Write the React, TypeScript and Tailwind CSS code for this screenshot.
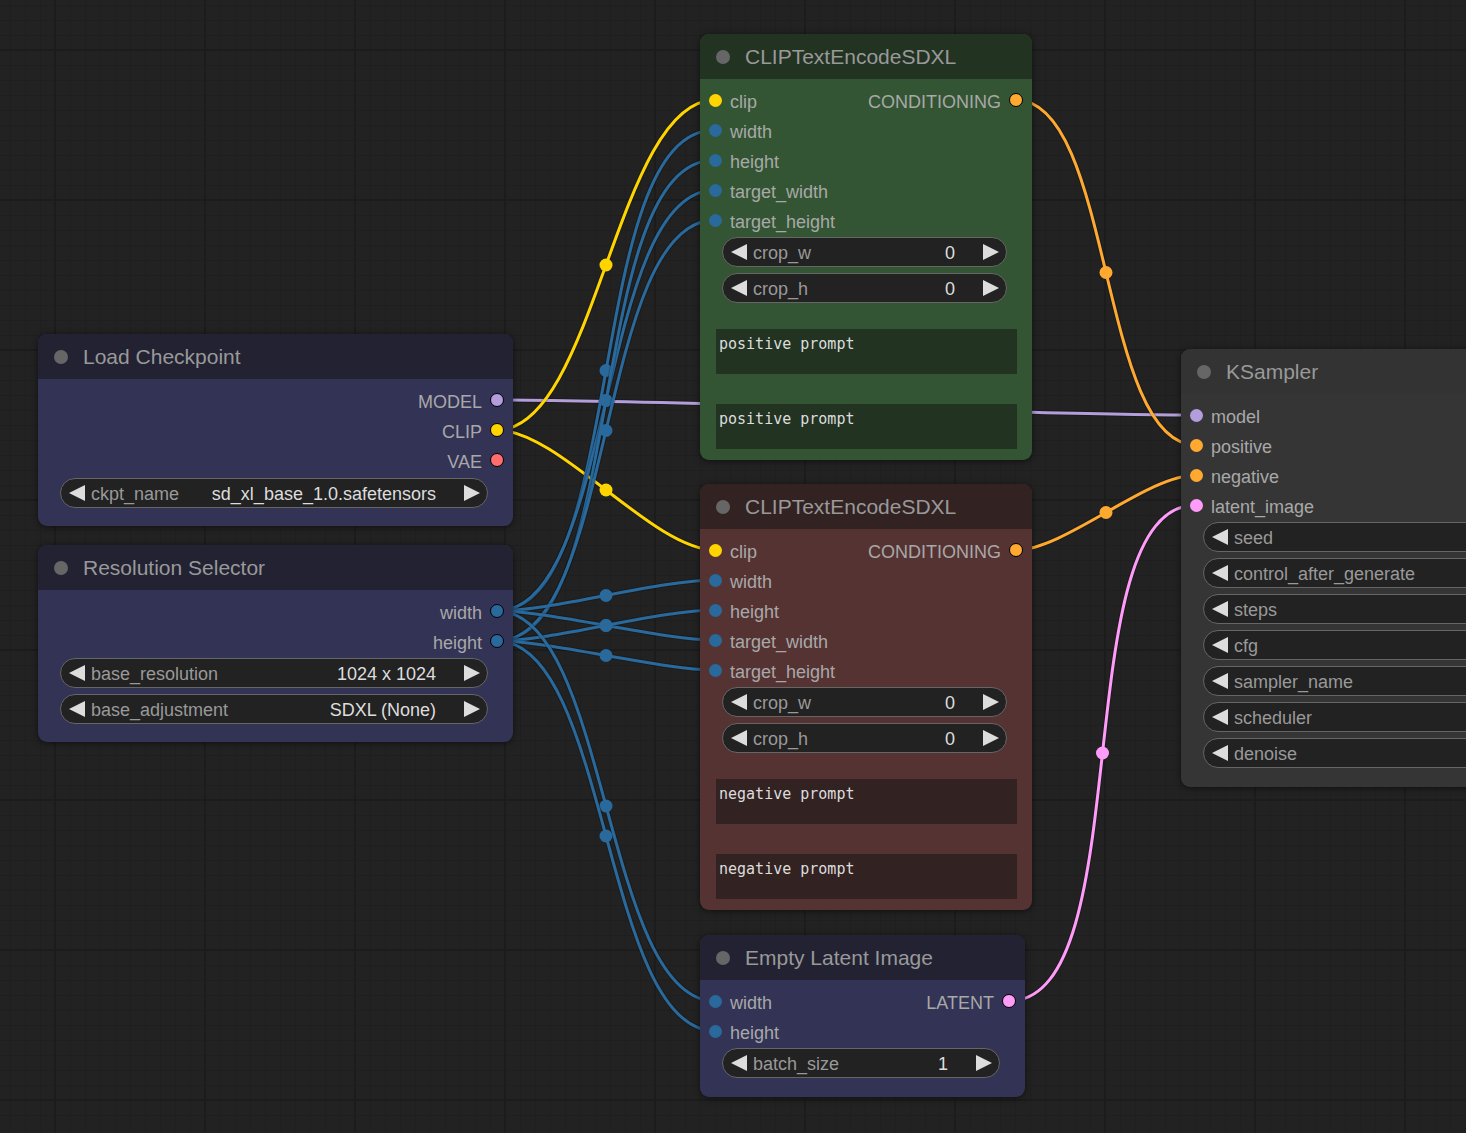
import type { ReactNode } from 'react';

// slot colours used by the graph
const COLORS = {
    clip: '#FFD500',
    model: '#B39DDB',
    int: '#29699C',
    cond: '#FFA931',
    latent: '#FF9CF9',
};

type Link = { from: [number, number]; to: [number, number]; color: string };

const LINKS: Link[] = [
    { from: [497, 400], to: [1196, 415], color: COLORS.model },
    { from: [497, 430], to: [715, 100], color: COLORS.clip },
    { from: [497, 430], to: [715, 550], color: COLORS.clip },
    // Resolution Selector width / height fan out
    { from: [497, 611], to: [715, 130], color: COLORS.int },
    { from: [497, 611], to: [715, 190], color: COLORS.int },
    { from: [497, 641], to: [715, 160], color: COLORS.int },
    { from: [497, 641], to: [715, 220], color: COLORS.int },
    { from: [497, 611], to: [715, 580], color: COLORS.int },
    { from: [497, 611], to: [715, 640], color: COLORS.int },
    { from: [497, 641], to: [715, 610], color: COLORS.int },
    { from: [497, 641], to: [715, 670], color: COLORS.int },
    { from: [497, 611], to: [715, 1001], color: COLORS.int },
    { from: [497, 641], to: [715, 1031], color: COLORS.int },
    { from: [1016, 100], to: [1196, 445], color: COLORS.cond },
    { from: [1016, 550], to: [1196, 475], color: COLORS.cond },
    { from: [1009, 1001], to: [1196, 505], color: COLORS.latent },
];

function bezier({ from, to }: Link) {
    const [ax, ay] = from;
    const [bx, by] = to;
    const d = Math.hypot(bx - ax, by - ay) * 0.25;
    return `M${ax} ${ay} C${ax + d} ${ay} ${bx - d} ${by} ${bx} ${by}`;
}

function Canvas() {
    return (
        <svg className="absolute inset-0 h-full w-full" width="1466" height="1133">
            <defs>
                <pattern id="minor" x="55" y="50" width="15" height="15" patternUnits="userSpaceOnUse">
                    <path d="M0 0.5H15M0.5 0V15" stroke="#1f1f1f" strokeWidth="1" fill="none" />
                </pattern>
                <pattern id="major" x="54" y="49" width="150" height="150" patternUnits="userSpaceOnUse">
                    <path d="M0 1H150M1 0V150" stroke="#1c1c1c" strokeWidth="2" fill="none" />
                </pattern>
            </defs>
            <rect width="1466" height="1133" fill="#222222" />
            <rect width="1466" height="1133" fill="url(#minor)" />
            <rect width="1466" height="1133" fill="url(#major)" />
            {LINKS.map((l, i) => (
                <g key={i}>
                    <path d={bezier(l)} stroke="rgba(0,0,0,0.2)" strokeWidth="5" fill="none" />
                    <path d={bezier(l)} stroke={l.color} strokeWidth="3" fill="none" />
                    <circle cx={(l.from[0] + l.to[0]) / 2} cy={(l.from[1] + l.to[1]) / 2} r="6.5" fill={l.color} />
                </g>
            ))}
        </svg>
    );
}

function Node({ className, head, title, children }: { className: string; head: string; title: string; children: ReactNode }) {
    return (
        <div className={`absolute overflow-hidden rounded-[9px] shadow-[0_1px_6px_rgba(0,0,0,0.55)] ${className}`}>
            <div className={`flex h-[45px] items-center ${head}`}>
                <span className="ml-[16px] h-[14px] w-[14px] rounded-full bg-[#666]" />
                <span className="ml-[15px] text-[21px] leading-none text-[#999]">{title}</span>
            </div>
            <div className="pt-[6px]">{children}</div>
        </div>
    );
}

function Row({ input, inDot, output, outDot }: { input?: string; inDot?: string; output?: string; outDot?: string }) {
    return (
        <div className="flex h-[30px] items-center text-[18px] leading-none text-[#a8a8a8]">
            {input && (
                <>
                    <span className={`ml-[8.5px] h-[13px] w-[13px] rounded-full ${inDot}`} />
                    <span className="ml-[8.5px] pt-[3px]">{input}</span>
                </>
            )}
            {output && (
                <>
                    <span className="ml-auto pt-[3px]">{output}</span>
                    <span className={`ml-[8px] mr-[9px] h-[14px] w-[14px] rounded-full border-[1.5px] border-black ${outDot}`} />
                </>
            )}
        </div>
    );
}

function Tri({ dir }: { dir: 'l' | 'r' }) {
    return (
        <svg width="16" height="16" viewBox="0 0 16 16" className="shrink-0">
            <polygon points={dir === 'l' ? '16,0 0,8 16,16' : '0,0 16,8 0,16'} fill="#ddd" />
        </svg>
    );
}

function Widget({ label, value, className = '' }: { label: string; value?: string; className?: string }) {
    return (
        <div className={`ml-[22px] mr-[25px] flex h-[30px] items-center rounded-full border border-[#666] bg-[#222] text-[18px] leading-none ${className}`}>
            <span className="ml-[8px]"><Tri dir="l" /></span>
            <span className="ml-[6px] pt-[1px] text-[#999]">{label}</span>
            {value !== undefined && (
                <>
                    <span className="ml-auto pt-[1px] text-[#ddd]">{value}</span>
                    <span className="ml-[28px] mr-[7px]"><Tri dir="r" /></span>
                </>
            )}
        </div>
    );
}

function Prompt({ text, className }: { text: string; className: string }) {
    return (
        <div className={`ml-[16px] mr-[15px] h-[45px] px-[3px] pt-[6px] font-['DejaVu_Sans_Mono',monospace] text-[15px] leading-[18px] text-[#ddd] ${className}`}>
            {text}
        </div>
    );
}

function ClipNode({ className, head, area, word }: { className: string; head: string; area: string; word: string }) {
    return (
        <Node className={className} head={head} title="CLIPTextEncodeSDXL">
            <Row input="clip" inDot="bg-[#FFD500]" output="CONDITIONING" outDot="bg-[#FFA931]" />
            <Row input="width" inDot="bg-[#29699C]" />
            <Row input="height" inDot="bg-[#29699C]" />
            <Row input="target_width" inDot="bg-[#29699C]" />
            <Row input="target_height" inDot="bg-[#29699C]" />
            <Widget label="crop_w" value="0" className="mt-[2px]" />
            <Widget label="crop_h" value="0" className="mt-[6px]" />
            <Prompt text={`${word} prompt`} className={`mt-[26px] ${area}`} />
            <Prompt text={`${word} prompt`} className={`mt-[30px] ${area}`} />
            <div className="h-[11px]" />
        </Node>
    );
}

export default function App() {
    return (
        <div className="relative h-[1133px] w-[1466px] overflow-hidden bg-[#222] font-['Liberation_Sans',Arial,sans-serif]">
            <Canvas />

            <Node className="left-[38px] top-[334px] w-[475px] bg-[#333355]" head="bg-[#222233]" title="Load Checkpoint">
                <Row output="MODEL" outDot="bg-[#B39DDB]" />
                <Row output="CLIP" outDot="bg-[#FFD500]" />
                <Row output="VAE" outDot="bg-[#FF6E6E]" />
                <Widget label="ckpt_name" value="sd_xl_base_1.0.safetensors" className="mt-[3px]" />
                <div className="h-[18px]" />
            </Node>

            <Node className="left-[38px] top-[545px] w-[475px] bg-[#333355]" head="bg-[#222233]" title="Resolution Selector">
                <Row output="width" outDot="bg-[#29699C]" />
                <Row output="height" outDot="bg-[#29699C]" />
                <Widget label="base_resolution" value="1024 x 1024" className="mt-[2px]" />
                <Widget label="base_adjustment" value="SDXL (None)" className="mt-[6px]" />
                <div className="h-[18px]" />
            </Node>

            <ClipNode className="left-[700px] top-[34px] w-[332px] bg-[#335533]" head="bg-[#223322]" area="bg-[#223322]" word="positive" />
            <ClipNode className="left-[700px] top-[484px] w-[332px] bg-[#553333]" head="bg-[#332222]" area="bg-[#332222]" word="negative" />

            <Node className="left-[700px] top-[935px] w-[325px] bg-[#333355]" head="bg-[#222233]" title="Empty Latent Image">
                <Row input="width" inDot="bg-[#29699C]" output="LATENT" outDot="bg-[#FF9CF9]" />
                <Row input="height" inDot="bg-[#29699C]" />
                <Widget label="batch_size" value="1" className="mt-[2px]" />
                <div className="h-[19px]" />
            </Node>

            <Node className="left-[1181px] top-[349px] w-[420px] bg-[#353535]" head="bg-[#333333]" title="KSampler">
                <Row input="model" inDot="bg-[#B39DDB]" />
                <Row input="positive" inDot="bg-[#FFA931]" />
                <Row input="negative" inDot="bg-[#FFA931]" />
                <Row input="latent_image" inDot="bg-[#FF9CF9]" />
                <Widget label="seed" className="mt-[2px]" />
                <Widget label="control_after_generate" className="mt-[6px]" />
                <Widget label="steps" className="mt-[6px]" />
                <Widget label="cfg" className="mt-[6px]" />
                <Widget label="sampler_name" className="mt-[6px]" />
                <Widget label="scheduler" className="mt-[6px]" />
                <Widget label="denoise" className="mt-[6px]" />
                <div className="h-[19px]" />
            </Node>
        </div>
    );
}
